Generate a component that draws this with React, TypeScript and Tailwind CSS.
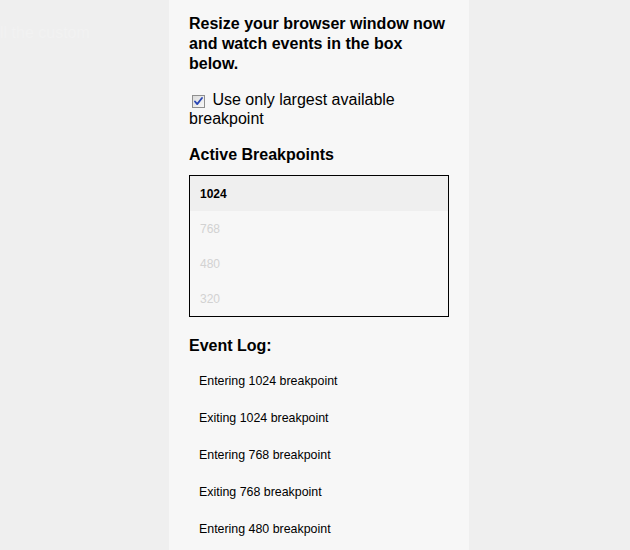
const breakpoints = [
  { size: 1024, active: true },
  { size: 768, active: false },
  { size: 480, active: false },
  { size: 320, active: false },
];

const events = [
  "Entering 1024 breakpoint",
  "Exiting 1024 breakpoint",
  "Entering 768 breakpoint",
  "Exiting 768 breakpoint",
  "Entering 480 breakpoint",
];

function CheckBox() {
  return (
    <span className="mx-[3px] inline-flex h-[13px] w-[13px] items-center justify-center border border-[#8f8f8f] bg-gradient-to-br from-[#dcdcdc] to-[#f8f8f8] align-[-1px]">
      <svg width="9" height="9" viewBox="0 0 9 9" fill="none" aria-hidden="true">
        <path d="M1 4.5l2.2 2.6L8 1" stroke="#2a47b5" strokeWidth="1.8" strokeLinecap="round" strokeLinejoin="round" />
      </svg>
    </span>
  );
}

export default function App() {
  return (
    <div className="relative h-[550px] overflow-hidden bg-[#efefef] font-['Liberation_Sans',Arial,sans-serif] text-black">
      {/* faint backdrop text */}
      <div className="absolute left-0 top-[24px] text-[16px] leading-[18px] text-[#f2f2f2]">
        ll the custom
      </div>

      <main className="relative ml-[169px] h-full w-[300px] bg-[#f7f7f7] px-5 pt-[14px]">
        <h2 className="text-[16px] font-bold leading-[20px]">
          Resize your browser window now and watch events in the box below.
        </h2>

        <label className="mt-[16px] block text-[16px] leading-[19px]">
          <CheckBox /> Use only largest available breakpoint
        </label>

        <h3 className="mt-[17px] text-[16px] font-bold leading-[19px]">Active Breakpoints</h3>

        <ul className="mt-[11px] border border-black">
          {breakpoints.map((bp) => (
            <li
              key={bp.size}
              className={[
                "flex h-[35px] items-center px-[10px] text-[12px]",
                bp.active ? "bg-[#efefef] font-bold text-black" : "text-[#d2d2d2]",
              ].join(" ")}
            >
              {bp.size}
            </li>
          ))}
        </ul>

        <h3 className="mt-[19px] text-[16px] font-bold leading-[20px]">Event Log:</h3>

        <ul className="mt-[7px] pl-[10px] text-[12.4px]">
          {events.map((e) => (
            <li key={e} className="flex h-[37px] items-center">
              {e}
            </li>
          ))}
        </ul>
      </main>
    </div>
  );
}
